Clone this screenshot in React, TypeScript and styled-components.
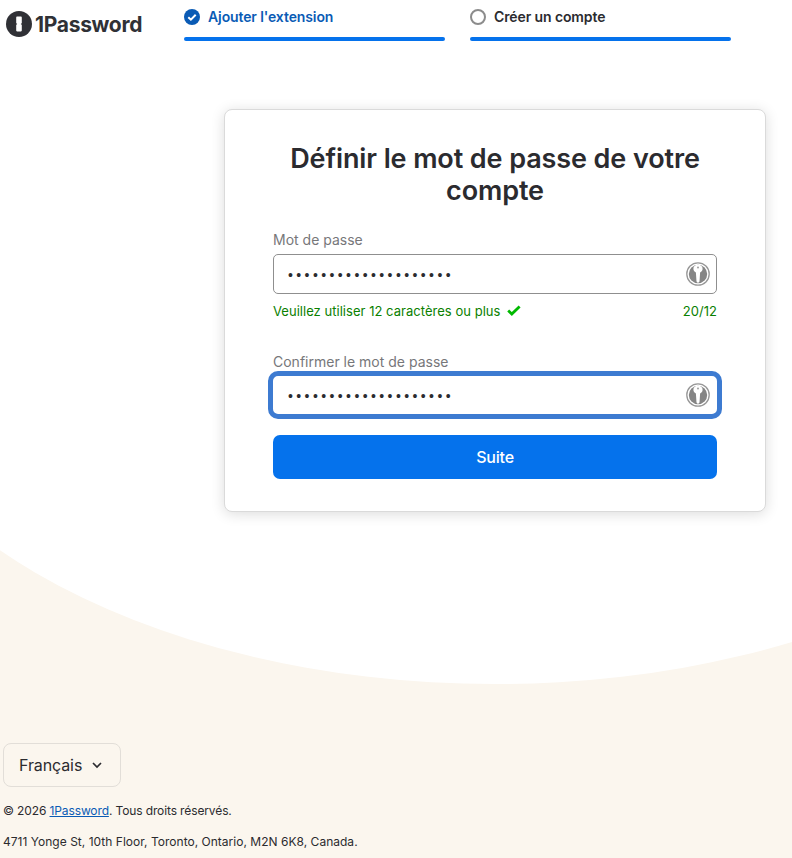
import React from "react";
import styled, { createGlobalStyle } from "styled-components";

const Global = createGlobalStyle`
  html, body { margin: 0; padding: 0; background: #fff; }
  body { font-family: Inter, "Liberation Sans", sans-serif; color: #2b2b2f; }
  * { box-sizing: border-box; }
`;

const Page = styled.div`
  position: relative;
  width: 792px;
  height: 858px;
  overflow: hidden;
  background: #fbf6ee;
  display: flex;
  flex-direction: column;
`;

const WhiteCurve = styled.div`
  position: absolute;
  left: -155px;
  top: -76px;
  width: 1300px;
  height: 760px;
  border-radius: 50%;
  background: #fff;
`;

const TopCover = styled.div`
  position: absolute;
  left: 0;
  top: 0;
  width: 792px;
  height: 304px;
  background: #fff;
`;

const Header = styled.header`
  position: relative;
  display: flex;
  align-items: flex-start;
  height: 109px;
  padding-left: 6px;
`;

const Logo = styled.div`
  display: flex;
  align-items: center;
  gap: 3px;
  width: 178px;
  height: 26px;
  margin-top: 11px;
`;

const LogoText = styled.span`
  font-size: 21px;
  font-weight: 700;
  letter-spacing: -0.3px;
  color: #303136;
`;

const Steps = styled.div`
  display: flex;
  gap: 25px;
`;

const Step = styled.div`
  width: 261px;
  height: 41px;
  display: flex;
  flex-direction: column;
  justify-content: space-between;
  padding-top: 9px;
`;

const StepHead = styled.div`
  display: flex;
  align-items: center;
  gap: 8px;
  height: 16px;
`;

const StepLabel = styled.span<{ $active?: boolean }>`
  font-size: 14px;
  font-weight: 600;
  line-height: 20px;
  letter-spacing: -0.11px;
  color: ${(p) => (p.$active ? "#0a5bb5" : "#2b2b2f")};
`;

const StepBar = styled.div`
  height: 4px;
  border-radius: 2px;
  background: #0572ec;
`;

const EmptyDot = styled.span`
  width: 16px;
  height: 16px;
  border-radius: 50%;
  border: 2px solid #8c8c8c;
`;

const Main = styled.main`
  position: relative;
  flex: 1;
  padding-left: 224px;
`;

const Card = styled.section`
  width: 542px;
  height: 403px;
  background: #fff;
  border: 1px solid #dadada;
  border-radius: 8px;
  box-shadow: 0 2px 14px rgba(0, 0, 0, 0.14);
  padding: 33px 48px 0;
`;

const Title = styled.h1`
  margin: 0 0 24px;
  font-size: 27px;
  line-height: 32px;
  font-weight: 600;
  letter-spacing: -0.1px;
  text-align: center;
  color: #2b2b2f;
`;

const Label = styled.label`
  display: block;
  font-size: 14px;
  line-height: 17px;
  color: #77777a;
  margin-bottom: 6px;
`;

const Field = styled.div<{ $focus?: boolean }>`
  position: relative;
  height: ${(p) => (p.$focus ? "48px" : "40px")};
  margin: ${(p) => (p.$focus ? "-5px" : "0")};
  border: ${(p) => (p.$focus ? "5px solid #3d7bd1" : "1px solid #8f8f8f")};
  border-radius: ${(p) => (p.$focus ? "10px" : "5px")};
  background: #fff;
  display: flex;
  align-items: center;
  padding: ${(p) => (p.$focus ? "0 7px 0 15px" : "0 6px 0 14px")};
`;

const Input = styled.input`
  flex: 1;
  min-width: 0;
  border: 0;
  outline: 0;
  padding: 2px 0 0;
  background: transparent;
  font-family: "Liberation Sans", sans-serif;
  font-size: 14px;
  letter-spacing: 3.4px;
  color: #2b2b2f;
`;

const Help = styled.div`
  display: flex;
  justify-content: space-between;
  align-items: center;
  height: 17px;
  margin: 8px 0 34px;
  font-size: 13px;
  letter-spacing: 0.03px;
  color: #0a8000;
`;

const HelpLeft = styled.span`
  display: flex;
  align-items: center;
  gap: 7px;
`;

const Submit = styled.button`
  display: block;
  width: 100%;
  height: 44px;
  margin-top: 21px;
  border: 0;
  border-radius: 7px;
  background: #0572ec;
  color: #fff;
  font-family: inherit;
  font-size: 16px;
  font-weight: 500;
  letter-spacing: -0.2px;
`;

const Footer = styled.footer`
  position: relative;
  height: 115px;
  padding-left: 3px;
  font-size: 12px;
  color: #2b2b2f;
`;

const Lang = styled.button`
  display: flex;
  align-items: center;
  gap: 9px;
  width: 118px;
  height: 44px;
  padding: 0 0 0 15px;
  background: transparent;
  border: 1px solid #e2ded8;
  border-radius: 8px;
  font-family: inherit;
  font-size: 16px;
  letter-spacing: -0.1px;
  color: #2b2b2f;
`;

const FootLine = styled.p<{ $gap: number; $track: number }>`
  margin: ${(p) => p.$gap}px 0 0;
  line-height: 15px;
  letter-spacing: ${(p) => p.$track}px;
`;

const FootLink = styled.a`
  color: #0a5bb5;
  text-decoration: underline;
`;

const KeyIcon = () => (
  <svg width="24" height="24" viewBox="0 0 24 24" aria-hidden="true" style={{ flex: "none" }}>
    <circle cx="12" cy="12" r="11.2" fill="none" stroke="#979797" strokeWidth="1.3" />
    <circle cx="12" cy="12" r="9.2" fill="#858585" />
    <path
      d="M12 2.8c3 0 4.6 1.7 4.6 3.9 0 1.8-1 3-2.5 3.7l-.6 9-1.5 1.6-1.5-1.6-.6-9c-1.5-.7-2.5-1.9-2.5-3.7 0-2.2 1.6-3.9 4.6-3.9z"
      fill="#fff"
    />
    <circle cx="12" cy="5.6" r="1" fill="#a0a0a0" />
  </svg>
);

const Mark = () => (
  <svg width="26" height="26" viewBox="0 0 26 26" aria-hidden="true">
    <circle cx="13" cy="13" r="13" fill="#303136" />
    <path
      d="M11 5.6h4c.5 0 .8.3.8.8v5.6c0 .3-.1.4-.4.6l-.7.4.7.4c.3.2.4.3.4.6v5.6c0 .5-.3.8-.8.8h-4c-.5 0-.8-.3-.8-.8v-5.6c0-.3.1-.4.4-.6l.7-.4-.7-.4c-.3-.2-.4-.3-.4-.6V6.4c0-.5.3-.8.8-.8z"
      fill="#fff"
    />
  </svg>
);

const CheckDot = () => (
  <svg width="16" height="16" viewBox="0 0 16 16" aria-hidden="true">
    <circle cx="8" cy="8" r="8" fill="#0a5bb5" />
    <path d="M4.3 8.2l2.6 2.5 4.8-5" fill="none" stroke="#fff" strokeWidth="2" />
  </svg>
);

const Tick = () => (
  <svg width="14" height="11" viewBox="0 0 14 11" aria-hidden="true">
    <path d="M1.2 5.6l3.6 3.4L12.6 1.4" fill="none" stroke="#00b900" strokeWidth="2.8" />
  </svg>
);

const Chevron = () => (
  <svg width="12" height="8" viewBox="0 0 12 8" aria-hidden="true">
    <path d="M2 2l4 4 4-4" fill="none" stroke="#2b2b2f" strokeWidth="1.7" />
  </svg>
);

const pw = "aaaaaaaaaaaaaaaaaaaa";

export default function App() {
  return (
    <>
      <Global />
      <Page>
        <WhiteCurve />
        <TopCover />
        <Header>
          <Logo>
            <Mark />
            <LogoText>1Password</LogoText>
          </Logo>
          <Steps>
            <Step>
              <StepHead>
                <CheckDot />
                <StepLabel $active>Ajouter l'extension</StepLabel>
              </StepHead>
              <StepBar />
            </Step>
            <Step>
              <StepHead>
                <EmptyDot />
                <StepLabel>Créer un compte</StepLabel>
              </StepHead>
              <StepBar />
            </Step>
          </Steps>
        </Header>
        <Main>
          <Card>
            <Title>Définir le mot de passe de votre compte</Title>
            <Label>Mot de passe</Label>
            <Field>
              <Input type="password" value={pw} readOnly />
              <KeyIcon />
            </Field>
            <Help>
              <HelpLeft>
                Veuillez utiliser 12 caractères ou plus
                <Tick />
              </HelpLeft>
              <span>20/12</span>
            </Help>
            <Label>Confirmer le mot de passe</Label>
            <Field $focus>
              <Input type="password" value={pw} readOnly />
              <KeyIcon />
            </Field>
            <Submit>Suite</Submit>
          </Card>
        </Main>
        <Footer>
          <Lang>
            Français
            <Chevron />
          </Lang>
          <FootLine $gap={16} $track={-0.12}>
            © 2026 <FootLink href="#">1Password</FootLink>. Tous droits réservés.
          </FootLine>
          <FootLine $gap={16} $track={0.02}>
            4711 Yonge St, 10th Floor, Toronto, Ontario, M2N 6K8, Canada.
          </FootLine>
        </Footer>
      </Page>
    </>
  );
}
